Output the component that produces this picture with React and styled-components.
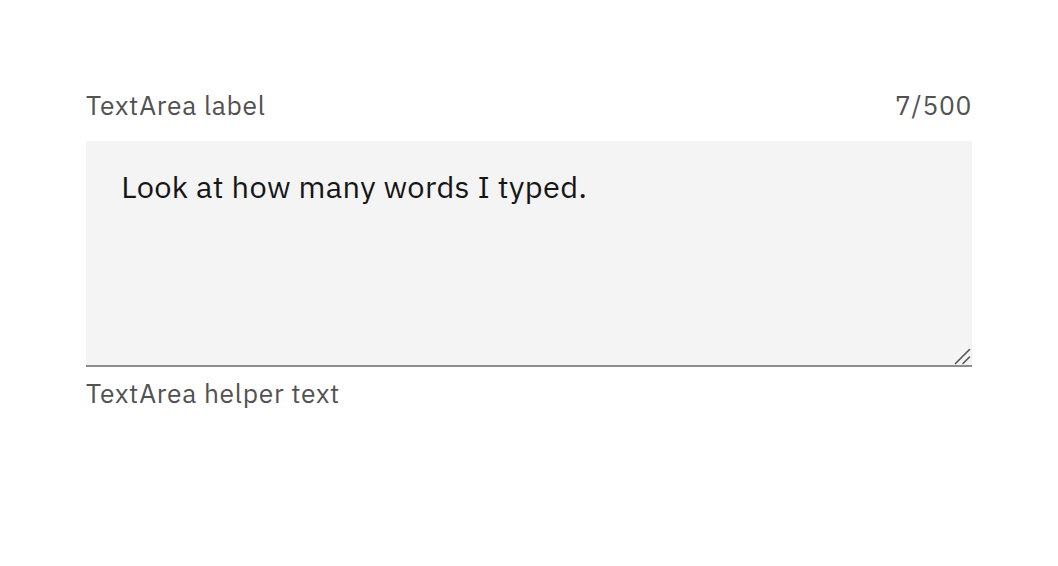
import React from 'react';
import styled, { createGlobalStyle } from 'styled-components';

const Global = createGlobalStyle`
  html, body {
    margin: 0;
    background: #ffffff;
  }
  body {
    font-family: "IBM Plex Sans", "Noto Sans", "Open Sans", sans-serif;
  }
`;

const Page = styled.div`
  display: flex;
  justify-content: center;
  padding-top: 88px;
`;

const Field = styled.div`
  display: flex;
  flex-direction: column;
  width: 886px;
`;

const LabelRow = styled.div`
  display: flex;
  justify-content: space-between;
  align-items: center;
  margin-bottom: 17.6px;
`;

const Label = styled.label`
  font-size: 26.4px;
  line-height: 35.2px;
  letter-spacing: 0.7px;
  color: #525252;
`;

const Counter = styled.span`
  font-size: 26.4px;
  line-height: 35.2px;
  letter-spacing: 0.7px;
  color: #525252;
`;

const AreaWrap = styled.div`
  position: relative;
  display: flex;
`;

const Area = styled.textarea`
  box-sizing: border-box;
  width: 100%;
  height: 226px;
  margin: 0;
  padding: 23.5px 35.2px;
  border: none;
  border-bottom: 2px solid #8d8d8d;
  background: #f4f4f4;
  color: #161616;
  font-family: inherit;
  font-size: 30.8px;
  line-height: 44px;
  letter-spacing: 0.35px;
  outline: none;
  resize: none;
`;

const Grip = styled.svg`
  position: absolute;
  right: 0;
  bottom: 2px;
  width: 18px;
  height: 18px;
  pointer-events: none;
`;

const Helper = styled.div`
  margin-top: 8.8px;
  font-size: 26.4px;
  line-height: 35.2px;
  letter-spacing: 0.7px;
  color: #525252;
`;

const App = () => {
  const text = 'Look at how many words I typed.';
  return (
    <Page>
      <Global />
      <Field>
        <LabelRow>
          <Label htmlFor="ta">TextArea label</Label>
          <Counter>7/500</Counter>
        </LabelRow>
        <AreaWrap>
          <Area id="ta" defaultValue={text} />
          <Grip viewBox="0 0 18 18">
            <path d="M1.5 16.5 L15.5 2.5 M9 16.5 L15.5 10" stroke="#555555" strokeWidth="1.6" strokeLinecap="round" />
          </Grip>
        </AreaWrap>
        <Helper>TextArea helper text</Helper>
      </Field>
    </Page>
  );
};

export default App;
